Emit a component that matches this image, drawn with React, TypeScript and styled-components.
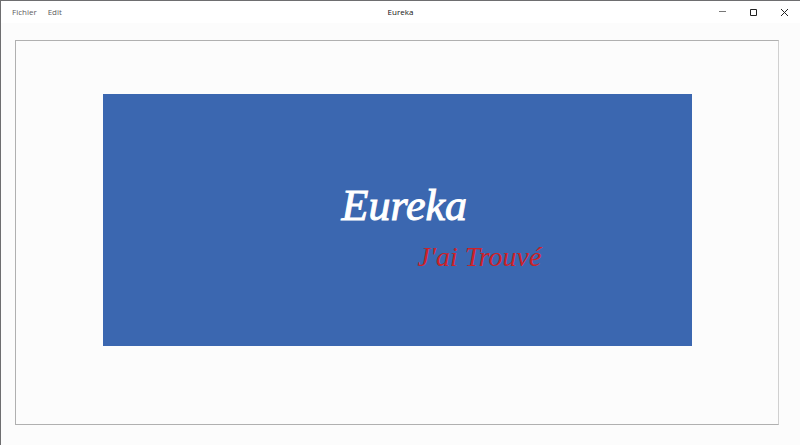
import React from "react";
import styled, { createGlobalStyle } from "styled-components";

const GlobalStyle = createGlobalStyle`
  *, *::before, *::after { box-sizing: border-box; }
  body { margin: 0; background: #fcfcfc; font-family: "Open Sans", "Noto Sans", sans-serif; }
`;

const Window = styled.div`
  display: flex;
  flex-direction: column;
  min-height: 100vh;
  border-top: 1px solid #6e6e70;
  border-left: 1px solid #6e6e70;
  background: #fcfcfc;
`;

const TitleBar = styled.header`
  display: grid;
  grid-template-columns: 1fr auto 1fr;
  align-items: center;
  height: 22px;
  background: #ffffff;
`;

const Menu = styled.nav`
  display: flex;
  gap: 11px;
  padding-left: 11px;
`;

const MenuButton = styled.button`
  padding: 0;
  border: 0;
  background: none;
  color: #5c5c60;
  font: inherit;
  font-size: 8px;
  line-height: 12px;
`;

const Title = styled.h1`
  margin: 0;
  color: #111111;
  font-size: 8px;
  font-weight: 400;
  line-height: 12px;
`;

const Controls = styled.div`
  display: flex;
  justify-content: flex-end;
`;

const ControlButton = styled.button`
  display: flex;
  align-items: center;
  justify-content: center;
  width: 31px;
  height: 22px;
  padding: 0;
  border: 0;
  background: none;
`;

const Icon = styled.svg`
  display: block;
  width: 9px;
  height: 9px;
  fill: none;
`;

const Frame = styled.main`
  flex: 1;
  margin: 17px 21px 20px 14px;
  padding: 53px 86px 77px 87px;
  border: 1px solid #b0b0b0;
  border-right-color: #d0d0d0;
`;

const Banner = styled.section`
  display: flex;
  flex-direction: column;
  align-items: center;
  justify-content: center;
  aspect-ratio: 7 / 3;
  background: #3b67b0;
  font-family: "Liberation Serif", serif;
  font-style: italic;
`;

const Wordmark = styled.div`
  display: flex;
  flex-direction: column;
  padding: 18px 0 0 88px;
`;

const Name = styled.h2`
  margin: 0;
  color: #ffffff;
  font-size: 44px;
  font-weight: 400;
  line-height: 56px;
  -webkit-text-stroke: 1px #ffffff;
`;

const Tagline = styled.p`
  margin: 0;
  padding-left: 76px;
  color: #cc2229;
  font-size: 28px;
  font-weight: 400;
  line-height: 46px;
`;

const App: React.FC = () => (
  <>
    <GlobalStyle />
    <Window>
      <TitleBar>
        <Menu aria-label="Menu">
          <MenuButton type="button">Fichier</MenuButton>
          <MenuButton type="button">Edit</MenuButton>
        </Menu>
        <Title>Eureka</Title>
        <Controls>
          <ControlButton type="button" aria-label="Réduire">
            <Icon viewBox="0 0 9 9"><path d="M1 3.5H8" stroke="#777" /></Icon>
          </ControlButton>
          <ControlButton type="button" aria-label="Agrandir">
            <Icon viewBox="0 0 9 9"><path d="M1.5 1.5H7.5V7.5H1.5Z" stroke="#222" /></Icon>
          </ControlButton>
          <ControlButton type="button" aria-label="Fermer">
            <Icon viewBox="0 0 9 9"><path d="M1 1L8 8M8 1L1 8" stroke="#222" /></Icon>
          </ControlButton>
        </Controls>
      </TitleBar>
      <Frame>
        <Banner>
          <Wordmark>
            <Name>Eureka</Name>
            <Tagline>J'ai Trouvé</Tagline>
          </Wordmark>
        </Banner>
      </Frame>
    </Window>
  </>
);

export default App;
